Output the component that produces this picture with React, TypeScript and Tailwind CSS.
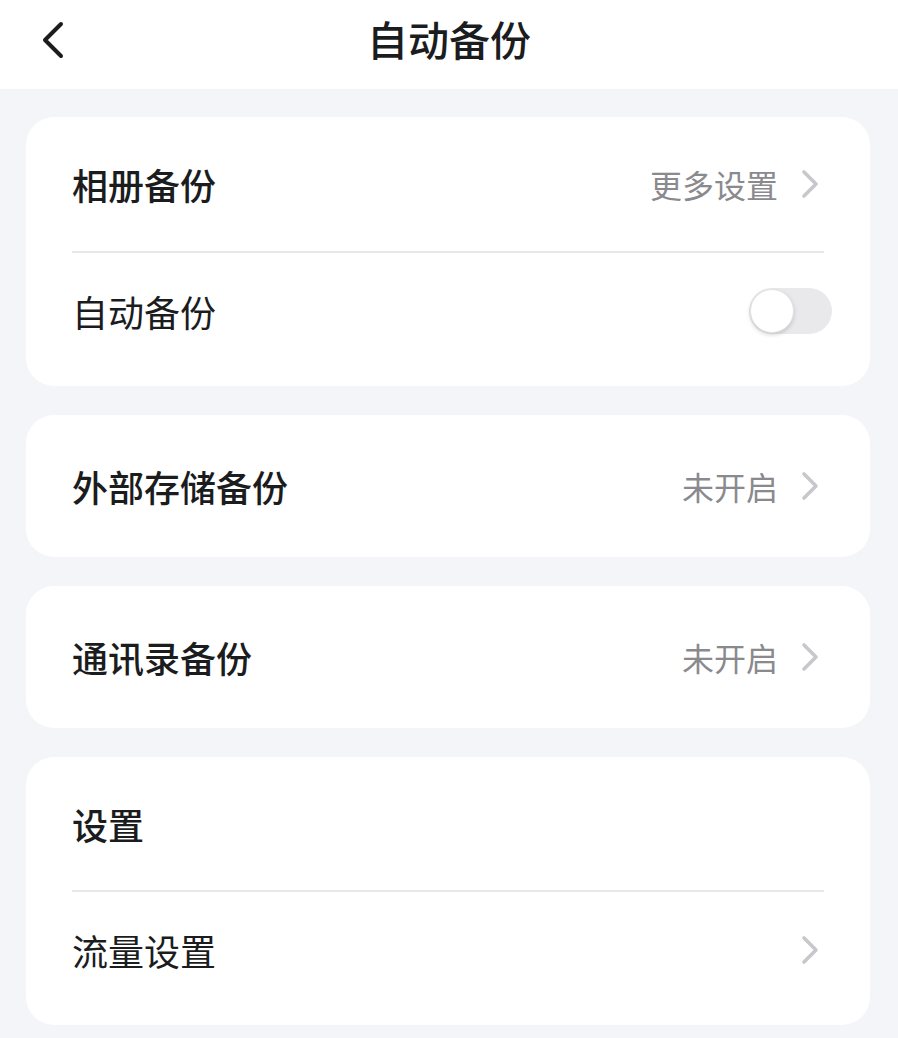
import React from "react";

const font = { fontFamily: '"Noto Sans CJK SC", "Noto Sans", sans-serif' };

function Chevron() {
  return (
    <svg width="20" height="30" viewBox="0 0 20 30" className="shrink-0 mr-[4px]">
      <path d="M4 3 L16 15 L4 27" fill="none" stroke="#c8c8cc" strokeWidth="3.6" strokeLinecap="round" strokeLinejoin="round" />
    </svg>
  );
}

function Toggle() {
  return (
    <div className="relative w-[83px] h-[46px] rounded-full bg-[#e9e9eb] mr-[-8px]">
      <div className="absolute left-[1px] top-[1px] w-[44px] h-[44px] rounded-full bg-white shadow-[0_2px_4px_rgba(0,0,0,0.16)] border border-[#e4e4e4]" />
    </div>
  );
}

function Row({ title, bold, right, chevron, toggle, h }: { title: string; bold?: boolean; right?: string; chevron?: boolean; toggle?: boolean; h: string }) {
  return (
    <div className={`flex items-center justify-between ${h}`}>
      <span className={`text-[36px] leading-none text-[#1b1c1e] ${bold ? "font-medium" : "font-normal"}`}>{title}</span>
      <div className="flex items-center gap-[22px]">
        {right && <span className="text-[32px] leading-none text-[#8a8a8e]">{right}</span>}
        {chevron && <Chevron />}
        {toggle && <Toggle />}
      </div>
    </div>
  );
}

export default function App() {
  return (
    <div className="w-[898px] h-[1038px] bg-[#f4f5f8] overflow-hidden" style={font}>
      <div className="h-[89px] bg-white relative flex justify-center">
        <svg width="30" height="40" viewBox="0 0 30 40" className="absolute left-[37px] top-[20px]">
          <path d="M24 4 L8 20 L24 36" fill="none" stroke="#1b1c1e" strokeWidth="4" strokeLinecap="round" strokeLinejoin="round" />
        </svg>
        <span className="mt-[14px] text-[41px] leading-[48px] font-medium text-[#1b1c1e]">自动备份</span>
      </div>
      <div className="flex flex-col gap-[29px] pt-[28px] w-[844px] ml-[26px]">
        <div className="bg-white rounded-[28px] px-[46px]">
          <Row title="相册备份" bold right="更多设置" chevron h="h-[134px]" />
          <div className="h-[2px] bg-[#e6e8ec]" />
          <div className="pb-[18px]">
            <Row title="自动备份" toggle h="h-[115px]" />
          </div>
        </div>
        <div className="bg-white rounded-[28px] px-[46px]">
          <Row title="外部存储备份" bold right="未开启" chevron h="h-[142px]" />
        </div>
        <div className="bg-white rounded-[28px] px-[46px]">
          <Row title="通讯录备份" bold right="未开启" chevron h="h-[142px]" />
        </div>
        <div className="bg-white rounded-[28px] px-[46px]">
          <Row title="设置" bold h="h-[133px]" />
          <div className="h-[2px] bg-[#e6e8ec]" />
          <div className="pb-[18px]">
            <Row title="流量设置" chevron h="h-[115px]" />
          </div>
        </div>
      </div>
    </div>
  );
}
